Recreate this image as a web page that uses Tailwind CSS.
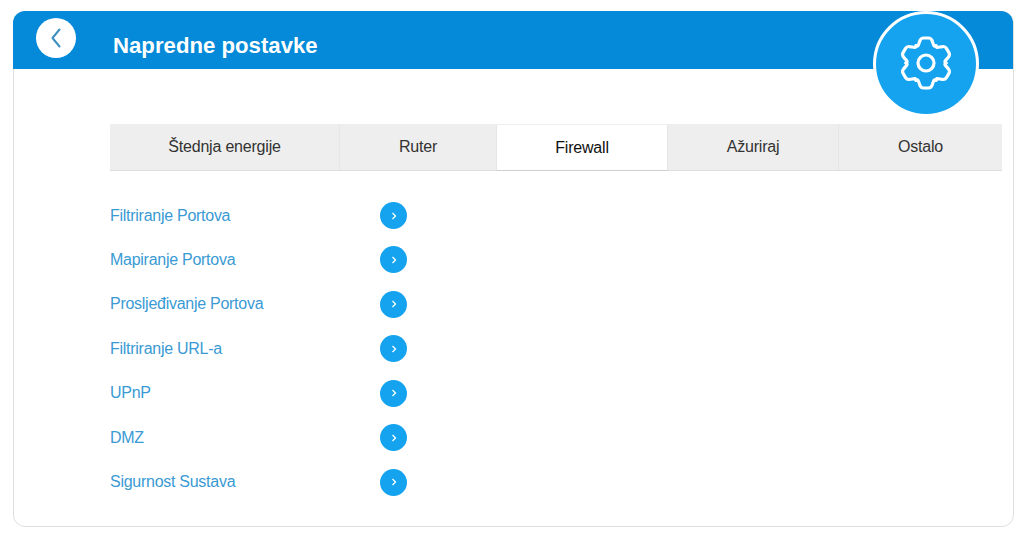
<!DOCTYPE html>
<html lang="hr">
<head>
  <meta charset="UTF-8">
  <title>Napredne postavke</title>
  <script src="https://cdn.jsdelivr.net/npm/@tailwindcss/browser@4"></script>
</head>
<body class="bg-white font-['Liberation_Sans',Arial,sans-serif] h-[538px] overflow-hidden">

  <div class="pt-[11px] pl-[13px]">
    <div class="relative w-[1001px] h-[516px] border border-[#dfdfdf] rounded-[12px]">

      <!-- Header -->
      <div class="relative -mt-px -ml-px -mb-px h-[58px] bg-[#048ad8] rounded-t-[12px] flex items-center">
        <button class="absolute left-[23px] top-[7px] w-[40px] h-[40px] rounded-full bg-white flex items-center justify-center">
          <svg width="14" height="24" viewBox="0 0 14 24" fill="none" stroke="#3d8fc0" stroke-width="2" stroke-linecap="round" stroke-linejoin="round"><path d="M10.5 3.5 3.5 12l7 8.5"/></svg>
        </button>
        <h1 class="ml-[100px] mt-[12px] text-[22.2px] font-bold text-white">Napredne postavke</h1>
      </div>

      <!-- Gear badge -->
      <div class="absolute left-[859px] top-[-1px] w-[106px] h-[106px] rounded-full bg-[#15a3ef] border-[3px] border-white flex items-center justify-center">
        <svg class="-mt-[2px]" width="52" height="54" viewBox="0 0 52 54" fill="none" stroke="white" stroke-width="3.200" stroke-linecap="round" stroke-linejoin="round">
          <defs><path id="tooth" d="M-10-17.300C-7.400-15.800-7.500-19-6-22.500Q-5-25-2.500-25L2.500-25Q5-25 6-22.500C7.500-19 7.400-15.800 10-17.300"/></defs>
          <g transform="translate(26 27)">
            <use href="#tooth"/>
            <use href="#tooth" transform="rotate(60)"/>
            <use href="#tooth" transform="rotate(120)"/>
            <use href="#tooth" transform="rotate(180)"/>
            <use href="#tooth" transform="rotate(240)"/>
            <use href="#tooth" transform="rotate(300)"/>
          </g>
          <circle cx="26" cy="27" r="8"/>
        </svg>
      </div>

      <!-- Tabs -->
      <div class="ml-[96px] mt-[56px] w-[892px] h-[47px] flex bg-[#eeeeee] border-b border-[#dddddd] text-[16px] tracking-[-0.2px] text-[#333333]">
        <div class="w-[230px] flex items-center justify-center border-r border-[#e6e6e6]">Štednja energije</div>
        <div class="w-[156px] flex items-center justify-center">Ruter</div>
        <div class="w-[172px] h-[46px] mt-px flex items-center justify-center bg-white text-[#111111] border-x border-b border-x-[#e6e6e6] border-b-[#cfcfcf]">Firewall</div>
        <div class="w-[171px] flex items-center justify-center border-r border-[#e6e6e6]">Ažuriraj</div>
        <div class="flex-1 flex items-center justify-center">Ostalo</div>
      </div>

      <!-- Links -->
      <ul class="ml-[96px] mt-[31px] w-[297px] flex flex-col gap-[17.45px] text-[16px] tracking-[-0.27px] text-[#3a9ad4]">
        <li class="h-[27px] flex items-center justify-between">
          <a href="#">Filtriranje Portova</a>
          <span class="w-[27px] h-[27px] rounded-full bg-[#15a3ef] flex items-center justify-center"><svg width="8" height="10" viewBox="0 0 8 10" fill="none" stroke="white" stroke-width="1.300"><path d="M2.500 2 5.500 5 2.500 8"/></svg></span>
        </li>
        <li class="h-[27px] flex items-center justify-between">
          <a href="#">Mapiranje Portova</a>
          <span class="w-[27px] h-[27px] rounded-full bg-[#15a3ef] flex items-center justify-center"><svg width="8" height="10" viewBox="0 0 8 10" fill="none" stroke="white" stroke-width="1.300"><path d="M2.500 2 5.500 5 2.500 8"/></svg></span>
        </li>
        <li class="h-[27px] flex items-center justify-between">
          <a href="#">Prosljeđivanje Portova</a>
          <span class="w-[27px] h-[27px] rounded-full bg-[#15a3ef] flex items-center justify-center"><svg width="8" height="10" viewBox="0 0 8 10" fill="none" stroke="white" stroke-width="1.300"><path d="M2.500 2 5.500 5 2.500 8"/></svg></span>
        </li>
        <li class="h-[27px] flex items-center justify-between">
          <a href="#">Filtriranje URL-a</a>
          <span class="w-[27px] h-[27px] rounded-full bg-[#15a3ef] flex items-center justify-center"><svg width="8" height="10" viewBox="0 0 8 10" fill="none" stroke="white" stroke-width="1.300"><path d="M2.500 2 5.500 5 2.500 8"/></svg></span>
        </li>
        <li class="h-[27px] flex items-center justify-between">
          <a href="#">UPnP</a>
          <span class="w-[27px] h-[27px] rounded-full bg-[#15a3ef] flex items-center justify-center"><svg width="8" height="10" viewBox="0 0 8 10" fill="none" stroke="white" stroke-width="1.300"><path d="M2.500 2 5.500 5 2.500 8"/></svg></span>
        </li>
        <li class="h-[27px] flex items-center justify-between">
          <a href="#">DMZ</a>
          <span class="w-[27px] h-[27px] rounded-full bg-[#15a3ef] flex items-center justify-center"><svg width="8" height="10" viewBox="0 0 8 10" fill="none" stroke="white" stroke-width="1.300"><path d="M2.500 2 5.500 5 2.500 8"/></svg></span>
        </li>
        <li class="h-[27px] flex items-center justify-between">
          <a href="#">Sigurnost Sustava</a>
          <span class="w-[27px] h-[27px] rounded-full bg-[#15a3ef] flex items-center justify-center"><svg width="8" height="10" viewBox="0 0 8 10" fill="none" stroke="white" stroke-width="1.300"><path d="M2.500 2 5.500 5 2.500 8"/></svg></span>
        </li>
      </ul>

    </div>
  </div>

</body>
</html>
